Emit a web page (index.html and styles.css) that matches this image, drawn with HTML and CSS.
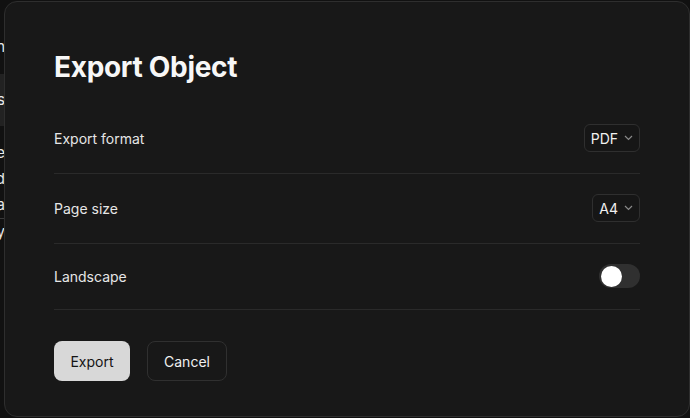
FILE: index.html
```html
<!DOCTYPE html>
<html lang="en">
<head>
    <meta charset="UTF-8">
    <meta name="viewport" content="width=device-width, initial-scale=1.0">
    <title>Export Object</title>
    <link rel="stylesheet" href="styles.css">
</head>
<body>
    <!-- page behind the modal, only its left edge shows -->
    <div class="page">
        <div class="page-line top">Open in</div>
        <div class="page-line band">Analysis</div>
        <div class="page-line">Share</div>
        <div class="page-line">Embed</div>
        <div class="page-line cut">Data</div>
        <div class="page-line">History</div>
    </div>

    <div class="overlay">
        <div class="dialog">
            <h1 class="dialog-title">Export Object</h1>

            <div class="row">
                <span class="row-label">Export format</span>
                <button class="select">PDF
                    <svg width="9" height="6" viewBox="0 0 9 6"><path d="M1 1l3.5 3.5L8 1" fill="none" stroke="#8a8a8a" stroke-width="1.2"/></svg>
                </button>
            </div>

            <div class="row">
                <span class="row-label">Page size</span>
                <button class="select">A4
                    <svg width="9" height="6" viewBox="0 0 9 6"><path d="M1 1l3.5 3.5L8 1" fill="none" stroke="#8a8a8a" stroke-width="1.2"/></svg>
                </button>
            </div>

            <div class="row">
                <span class="row-label">Landscape</span>
                <span class="toggle"><span class="knob"></span></span>
            </div>

            <div class="actions">
                <button class="btn btn-primary">Export</button>
                <button class="btn btn-ghost">Cancel</button>
            </div>
        </div>
    </div>
</body>
</html>
```

FILE: styles.css
```css
body {
    margin: 0;
    background-color: #111;
    color: #f2f2f2;
    font-family: Inter, "Noto Sans", sans-serif;
    width: 690px;
    height: 418px;
    overflow: hidden;
}

.page {
    width: 5px;
    padding-top: 34px;
    display: flex;
    flex-direction: column;
}

.page-line {
    direction: rtl;
    white-space: nowrap;
    overflow: hidden;
    font-size: 15px;
    line-height: 26px;
    color: #e8e8e8;
}

.page-line.band {
    background-color: #222;
    margin: 14px 0;
    padding: 13px 0;
}

.page-line.cut {
    border-bottom: 1px solid #3a3a3a;
}

.overlay {
    position: absolute;
    left: 4px;
    top: 1px;
}

.dialog {
    box-sizing: border-box;
    width: 686px;
    height: 416px;
    padding: 48px 49px 34px 49px;
    background-color: #181818;
    border: 1px solid #2e2e2e;
    border-radius: 13px;
}

.dialog-title {
    margin: 0 0 20px 0;
    font-size: 28px;
    line-height: 34px;
    font-weight: 700;
    color: #f7f7f7;
    letter-spacing: -0.3px;
}

.row {
    display: flex;
    align-items: center;
    justify-content: space-between;
    padding: 20px 0 21px 0;
    border-bottom: 1px solid #2a2a2a;
}

.row-label {
    font-size: 14px;
    color: #e6e6e6;
}

.select {
    display: flex;
    align-items: center;
    gap: 6px;
    height: 28px;
    padding: 0 6px;
    background-color: #161616;
    border: 1px solid #2f2f2f;
    border-radius: 6px;
    color: #f0f0f0;
    font-family: inherit;
    font-size: 14px;
}

.toggle {
    display: flex;
    align-items: center;
    width: 41px;
    height: 24px;
    padding: 0 2px;
    box-sizing: border-box;
    background-color: #303030;
    border-radius: 12px;
}

.knob {
    width: 21px;
    height: 21px;
    border-radius: 50%;
    background-color: #fff;
}

.actions {
    display: flex;
    gap: 17px;
    margin-top: 31px;
}

.btn {
    height: 40px;
    border-radius: 8px;
    font-family: inherit;
    font-size: 14px;
}

.btn-primary {
    width: 76px;
    background-color: #d8d8d8;
    border: none;
    color: #141414;
}

.btn-ghost {
    width: 80px;
    background-color: transparent;
    border: 1px solid #303030;
    color: #f0f0f0;
}
```
